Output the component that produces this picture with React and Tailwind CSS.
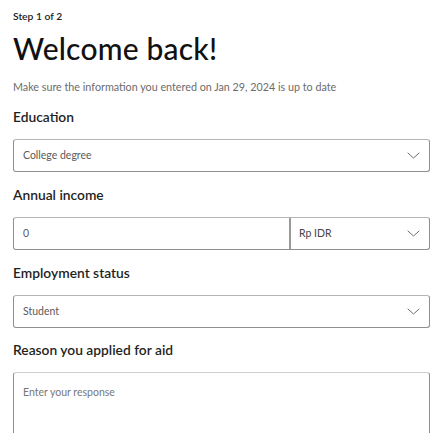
import React from "react";

const font = { fontFamily: "Lato, 'Noto Sans', sans-serif" };

function Chevron() {
  return (
    <svg width="13" height="7" viewBox="0 0 13 7" fill="none" className="shrink-0">
      <path d="M0.7 0.8 L6.5 6 L12.3 0.8" stroke="#6e6e6e" strokeWidth="1" />
    </svg>
  );
}

function Label({ children }) {
  return (
    <div className="h-5 leading-5 text-[13.8px] font-semibold text-[#1f1f1f] mb-3">{children}</div>
  );
}

export default function App() {
  return (
    <div className="w-[448px] h-[433px] overflow-hidden bg-white pl-[13px] pr-[18px] pt-[8px]" style={font}>
      <div className="h-4 leading-4 text-[10.3px] font-semibold text-[#222]">Step 1 of 2</div>
      <div className="mt-[6px] h-[36px] leading-[36px] text-[30px] font-medium text-[#111] tracking-[0.2px]">Welcome back!</div>
      <div className="mt-[13px] h-4 leading-4 text-[10.75px] text-[#6b6b6b]">Make sure the information you entered on Jan 29, 2024 is up to date</div>
      <div className="mt-[12px]">
        <Label>Education</Label>
        <div className="h-[33px] rounded-[3px] border border-[#8f8f8f] border-t-[#b5b5b5] flex items-center pl-[9px] pr-[9px] justify-between">
          <span className="text-[10.5px] text-[#5a5a5a]">College degree</span>
          <Chevron />
        </div>
      </div>
      <div className="mt-[13px]">
        <Label>Annual income</Label>
        <div className="h-[33px] rounded-[3px] border border-[#8f8f8f] border-t-[#b5b5b5] flex">
          <div className="w-[277px] flex items-center pl-[9px] border-r-2 border-[#9a9a9a]">
            <span className="text-[10.5px] text-[#5a5a5a]">0</span>
          </div>
          <div className="flex-1 flex items-center justify-between pl-[8px] pr-[9px]">
            <span className="text-[10.5px] text-[#444]">Rp IDR</span>
            <Chevron />
          </div>
        </div>
      </div>
      <div className="mt-[13px]">
        <Label>Employment status</Label>
        <div className="h-[33px] rounded-[3px] border border-[#8f8f8f] border-t-[#b5b5b5] flex items-center pl-[9px] pr-[9px] justify-between">
          <span className="text-[10.5px] text-[#5a5a5a]">Student</span>
          <Chevron />
        </div>
      </div>
      <div className="mt-[12px]">
        <Label>Reason you applied for aid</Label>
        <div className="h-[80px] rounded-[3px] border border-[#8f8f8f] border-t-[#cfcfcf] pl-[9px] pt-[5px]">
          <span className="text-[10.5px] text-[#777]">Enter your response</span>
        </div>
      </div>
    </div>
  );
}
